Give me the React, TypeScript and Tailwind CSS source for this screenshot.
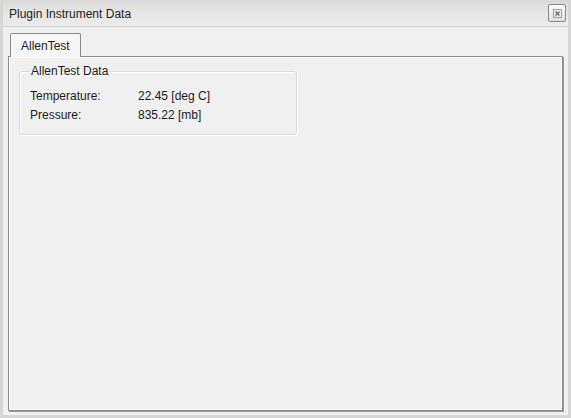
import React from "react";

const readings = [
  { label: "Temperature:", value: "22.45 [deg C]" },
  { label: "Pressure:", value: "835.22 [mb]" },
];

const CloseButton: React.FC = () => (
  <div className="w-[18px] h-[18px] border border-[#8a8a8a] rounded-[2px] bg-gradient-to-b from-[#fafafa] to-[#e0e0e0] flex items-center justify-center">
    <svg width="9" height="9" viewBox="0 0 9 9">
      <rect x="0.5" y="0.5" width="8" height="8" fill="none" stroke="#a0a0a0" />
      <path d="M2.5 2.5 L6.5 6.5 M6.5 2.5 L2.5 6.5" stroke="#666" strokeWidth="1.2" />
    </svg>
  </div>
);

const App: React.FC = () => {
  return (
    <div
      className="w-[571px] h-[418px] bg-[#f0f0f0] text-[12px] text-[#1a1a1a] flex flex-col border-l-[3px] border-r-[3px] border-b-[3px] border-[#d6d6d6] overflow-hidden"
      style={{ fontFamily: '"Liberation Sans", Arial, sans-serif' }}
    >
      {/* title bar */}
      <div className="h-[27px] shrink-0 flex items-center justify-between pl-[6px] pr-[2px] bg-gradient-to-b from-[#d9d9d9] via-[#e6e6e6] to-[#ececec] border-b border-[#cfcfcf]">
        <span className="text-[12px] text-[#222] pt-[2px]">Plugin Instrument Data</span>
        <CloseButton />
      </div>

      {/* tab control */}
      <div className="flex-1 flex flex-col px-[5px] pt-[6px] pb-[4px]">
        <div className="flex h-[23px] pl-[2px]">
          <div className="relative z-10 h-[24px] px-[10px] flex items-center bg-[#f7f7f7] border border-[#898989] border-b-0 rounded-t-[2px]">
            AllenTest
          </div>
        </div>
        <div className="flex-1 border border-[#898989] shadow-[inset_0_0_0_1px_#ffffff,1px_1px_0_0_#9a9a9a] bg-[#f0f0f0] px-[10px] pt-[5px]">
          <fieldset className="w-[278px] h-[73px] border border-[#dcdcdc] rounded-[3px] shadow-[inset_1px_1px_0_0_#ffffff,1px_1px_0_0_#ffffff] px-[10px] pb-[6px]">
            <legend className="px-[2px] -ml-[1px]">AllenTest Data</legend>
            <div className="flex flex-col gap-[4px] pt-[9px]">
              {readings.map((r) => (
                <div key={r.label} className="flex leading-[15px]">
                  <span className="w-[108px]">{r.label}</span>
                  <span>{r.value}</span>
                </div>
              ))}
            </div>
          </fieldset>
        </div>
      </div>
    </div>
  );
};

export default App;
